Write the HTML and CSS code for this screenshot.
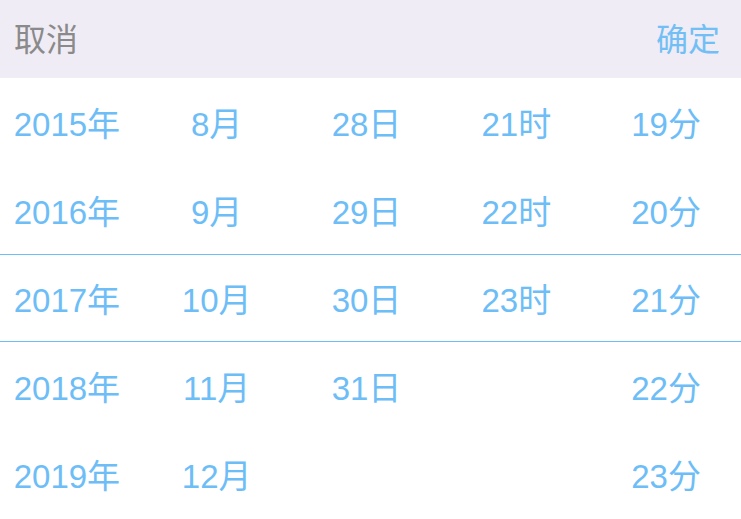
FILE: index.html
```html
<!DOCTYPE html>
<html lang="zh-CN">
<head>
    <meta charset="UTF-8">
    <meta name="viewport" content="width=device-width, initial-scale=1.0">
    <title>日期选择</title>
    <link rel="stylesheet" href="styles.css">
</head>
<body>
    <div class="toolbar">
        <button class="btn-cancel">取消</button>
        <button class="btn-ok">确定</button>
    </div>
    <div class="picker">
        <div class="row">
            <span>2015年</span><span>8月</span><span>28日</span><span>21时</span><span>19分</span>
        </div>
        <div class="row">
            <span>2016年</span><span>9月</span><span>29日</span><span>22时</span><span>20分</span>
        </div>
        <div class="row selected">
            <span>2017年</span><span>10月</span><span>30日</span><span>23时</span><span>21分</span>
        </div>
        <div class="row">
            <span>2018年</span><span>11月</span><span>31日</span><span></span><span>22分</span>
        </div>
        <div class="row">
            <span>2019年</span><span>12月</span><span></span><span></span><span>23分</span>
        </div>
    </div>
</body>
</html>
```

FILE: styles.css
```css
body {
    margin: 0;
    font-family: "Liberation Sans", "Noto Sans CJK SC", sans-serif;
    background: #fff;
    overflow: hidden;
}
.toolbar {
    display: flex;
    justify-content: space-between;
    align-items: center;
    box-sizing: border-box;
    height: 78px;
    padding: 0 21px 4px 14px;
    background-color: #efecf5;
}
.toolbar button {
    background: none;
    border: none;
    padding: 0;
    font-family: inherit;
    font-size: 32px;
    cursor: pointer;
}
.btn-cancel {
    color: #8a8a8a;
}
.btn-ok {
    color: #72bff5;
}
.picker {
    margin-left: -8px;
    width: calc(100% + 8px);
}
.row {
    display: grid;
    grid-template-columns: repeat(5, 1fr);
    align-items: center;
    box-sizing: border-box;
    height: 88px;
    padding-bottom: 1px;
    color: #6dbdf7;
    font-size: 33px;
    text-align: center;
}
.row.selected {
    border-top: 1px solid #6dbdf7;
    border-bottom: 1px solid #6dbdf7;
}
```
